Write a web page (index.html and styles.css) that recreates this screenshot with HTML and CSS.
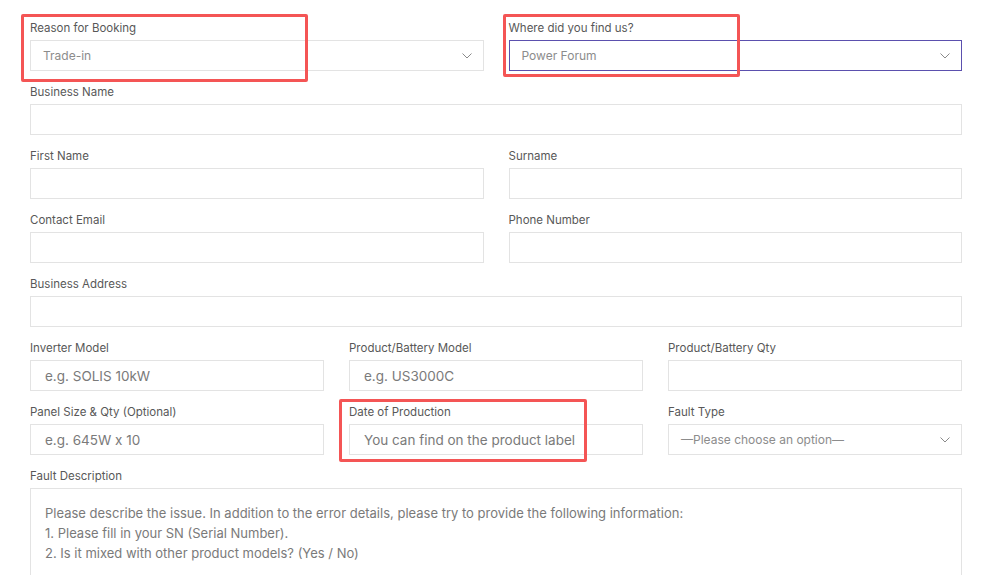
FILE: index.html
```html
<!DOCTYPE html>
<html lang="en">
<head>
<meta charset="utf-8">
<title>Booking Form</title>
<link rel="stylesheet" href="styles.css">
</head>
<body>
<form class="form">
  <div class="row two">
    <div class="field">
      <label class="label">Reason for Booking</label>
      <div class="control select"><span class="value">Trade-in</span><svg class="chev" width="10" height="6" viewBox="0 0 10 6"><path d="M0.5 0.5 L5 5 L9.5 0.5" fill="none" stroke="#8a8a8a" stroke-width="1"/></svg></div>
    </div>
    <div class="field">
      <label class="label">Where did you find us?</label>
      <div class="control select focus"><span class="value">Power Forum</span><svg class="chev" width="10" height="6" viewBox="0 0 10 6"><path d="M0.5 0.5 L5 5 L9.5 0.5" fill="none" stroke="#8a8a8a" stroke-width="1"/></svg></div>
    </div>
  </div>
  <div class="row one">
    <div class="field">
      <label class="label">Business Name</label>
      <div class="control"></div>
    </div>
  </div>
  <div class="row two">
    <div class="field"><label class="label">First Name</label><div class="control"></div></div>
    <div class="field"><label class="label">Surname</label><div class="control"></div></div>
  </div>
  <div class="row two">
    <div class="field"><label class="label">Contact Email</label><div class="control"></div></div>
    <div class="field"><label class="label">Phone Number</label><div class="control"></div></div>
  </div>
  <div class="row one">
    <div class="field"><label class="label">Business Address</label><div class="control"></div></div>
  </div>
  <div class="row three">
    <div class="field"><label class="label">Inverter Model</label><div class="control text"><span class="ph">e.g. SOLIS 10kW</span></div></div>
    <div class="field"><label class="label">Product/Battery Model</label><div class="control text"><span class="ph">e.g. US3000C</span></div></div>
    <div class="field"><label class="label">Product/Battery Qty</label><div class="control text"></div></div>
  </div>
  <div class="row three">
    <div class="field"><label class="label">Panel Size &amp; Qty (Optional)</label><div class="control text"><span class="ph">e.g. 645W x 10</span></div></div>
    <div class="field"><label class="label">Date of Production</label><div class="control text"><span class="ph">You can find on the product label</span></div></div>
    <div class="field"><label class="label">Fault Type</label><div class="control select"><span class="value">—Please choose an option—</span><svg class="chev" width="10" height="6" viewBox="0 0 10 6"><path d="M0.5 0.5 L5 5 L9.5 0.5" fill="none" stroke="#8a8a8a" stroke-width="1"/></svg></div></div>
  </div>
  <div class="row one">
    <div class="field">
      <label class="label">Fault Description</label>
      <div class="control area">
        <p class="line">Please describe the issue. In addition to the error details, please try to provide the following information:</p>
        <p class="line">1. Please fill in your SN (Serial Number).</p>
        <p class="line">2. Is it mixed with other product models? (Yes / No)</p>
      </div>
    </div>
  </div>
</form>
<div class="mark mark-1"></div>
<div class="mark mark-2"></div>
<div class="mark mark-3"></div>
</body>
</html>
```

FILE: styles.css
```css
html, body {
  margin: 0;
  padding: 0;
  background: #ffffff;
  overflow: hidden;
}
body {
  font-family: "Inter", "Liberation Sans", sans-serif;
  color: #555555;
  position: relative;
  height: 575px;
}
.form {
  display: flex;
  flex-direction: column;
  gap: 12px;
  padding: 19px 38px 0 30px;
  width: 932px;
}
.row {
  display: grid;
  column-gap: 25px;
}
.row.one { grid-template-columns: 1fr; }
.row.two { grid-template-columns: 1fr 1fr; }
.row.three { grid-template-columns: 1fr 1fr 1fr; }
.field {
  display: flex;
  flex-direction: column;
  min-width: 0;
}
.label {
  display: block;
  font-size: 11.5px;
  line-height: 18px;
  height: 18px;
  margin-bottom: 3px;
  color: #585858;
}
.control {
  box-sizing: border-box;
  height: 31px;
  border: 1px solid #e3e3e3;
  background: #fff;
  display: flex;
  align-items: center;
}
.control.select {
  padding: 0 11px 0 12px;
  justify-content: space-between;
}
.control.select .value {
  font-size: 12px;
  color: #8c8c8c;
}
.control.focus {
  border-color: #5b50ae;
}
.chev {
  display: block;
  margin-top: 1px;
}
.control.text {
  padding: 0 14px;
}
.control.text .ph {
  font-size: 13.5px;
  color: #7a7a7a;
}
.control.area {
  height: 120px;
  display: block;
  padding: 14px 14px;
}
.line {
  margin: 0;
  font-size: 13px;
  line-height: 20px;
  color: #7a7a7a;
}
.mark {
  position: absolute;
  box-sizing: border-box;
  border: 3px solid #f45555;
  border-radius: 2px;
}
.mark-1 { left: 21px; top: 14px; width: 287px; height: 68px; }
.mark-2 { left: 503px; top: 14px; width: 237px; height: 63px; }
.mark-3 { left: 339px; top: 399px; width: 248px; height: 63px; }
```
